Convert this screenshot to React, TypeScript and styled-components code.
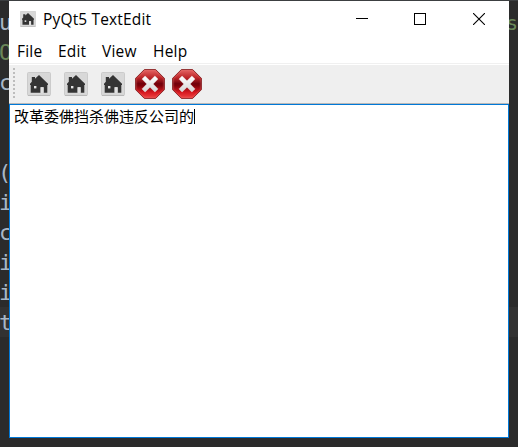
import React from "react";
import styled, { createGlobalStyle } from "styled-components";

const GlobalStyle = createGlobalStyle`
  * { box-sizing: border-box; }
  body { margin: 0; background: #2b2b2b; overflow: hidden; }
`;

const Desktop = styled.div`
  position: relative;
  width: 518px;
  height: 447px;
  padding-top: 6px;
  overflow: hidden;
  background: #2b2b2b;
  border-top: 1px solid #3c3f41;
`;

const CodeLine = styled.div<{ $current?: boolean }>`
  display: flex;
  justify-content: space-between;
  height: 30px;
  line-height: 32px;
  font-family: "DejaVu Sans Mono", monospace;
  font-size: 22px;
  white-space: pre;
  background: ${(p) => (p.$current ? "#323232" : "transparent")};
`;

const Code = styled.span<{ $tone?: "string" | "plain"; $shift?: number }>`
  color: ${(p) => (p.$tone === "string" ? "#6a8759" : "#a9b7c6")};
  margin-left: ${(p) => p.$shift ?? 0}px;
`;

const CodeEnd = styled(Code)`
  width: 12px;
  font-size: 20px;
`;

const Window = styled.section`
  position: absolute;
  left: 9px;
  top: 0;
  width: 500px;
  height: 437px;
  display: flex;
  flex-direction: column;
  background: #fff;
  color: #000;
  font-family: "Open Sans", "Noto Sans", sans-serif;
`;

const TitleBar = styled.header`
  display: flex;
  align-items: center;
  height: 36px;
  padding-left: 11px;
`;

const Title = styled.span`
  flex: 1;
  margin-left: 7px;
  font-size: 15.5px;
  line-height: 36px;
  letter-spacing: 0.16px;
`;

const Controls = styled.div`
  display: grid;
  grid-template-columns: 58px 59px 36px;
`;

const MenuBar = styled.nav`
  display: flex;
  height: 26px;
  padding-left: 8px;
`;

const MenuItem = styled.span<{ $width: number }>`
  width: ${(p) => p.$width}px;
  font-size: 15.5px;
  letter-spacing: 0.2px;
  line-height: 28px;
`;

const ToolBar = styled.div`
  display: flex;
  align-items: center;
  height: 41px;
  padding-left: 4px;
  background: #efefef;
  border-top: 1px solid #f0f0f0;
  border-bottom: 1px solid #b8b8b8;
  box-shadow: inset 0 1px #fff;
`;

const Handle = styled.svg`
  margin-right: 4px;
  margin-top: 1px;
`;

const ToolButton = styled.span`
  display: grid;
  place-items: center;
  width: 37px;
  height: 37px;
  padding-top: 1px;
`;

const TextArea = styled.main`
  flex: 1;
  display: flex;
  align-items: flex-start;
  padding: 2px 0 0 4px;
  border: 1px solid #0078d7;
  font-family: "Noto Sans CJK SC", sans-serif;
  font-size: 15px;
  line-height: 18px;
`;

const Caret = styled.span`
  width: 1px;
  height: 15px;
  margin-top: 2px;
  background: #000;
`;

const HomeIcon = ({ size }: { size: number }) => (
  <svg width={size} height={size} viewBox="0 0 24 24">
    <rect x="0.5" y="0.5" width="23" height="23" rx="1" fill="#d8d8d8" stroke="#cbcbcb" />
    <path d="M1 23.4H23" stroke="#b7b7b7" />
    <path
      d="M12 3L21 11.7V13H20.3V20.8H16.6V15.2H13.6V20.8H3.7V13H3V11.7L4.8 9.8V5H8V6.8Z"
      fill="#343434"
    />
    <rect x="7" y="14" width="2.4" height="2.4" fill="#e4e4e4" />
    <rect x="13.6" y="15.2" width="3" height="5.6" fill="#e0e0e0" />
  </svg>
);

const StopIcon = () => (
  <svg width="30" height="30" viewBox="0 0 30 30">
    <defs>
      <linearGradient id="stop" x1="0" y1="0" x2="0" y2="1">
        <stop offset="0" stopColor="#e56563" />
        <stop offset="0.28" stopColor="#bd2629" />
        <stop offset="0.49" stopColor="#70000a" />
        <stop offset="0.56" stopColor="#800008" />
        <stop offset="0.8" stopColor="#d91b22" />
        <stop offset="1" stopColor="#ee4644" />
      </linearGradient>
      <linearGradient id="cross" x1="0" y1="0" x2="0" y2="1">
        <stop offset="0" stopColor="#fff" />
        <stop offset="1" stopColor="#d5d5d5" />
      </linearGradient>
    </defs>
    <path d="M9.3 .6H20.7L29.4 9.3V20.7L20.7 29.4H9.3L.6 20.7V9.3Z" fill="url(#stop)" stroke="#8e2a2c" />
    <path d="M9.7 1.7H20.3L28.3 9.7V20.3L20.3 28.3H9.7L1.7 20.3V9.7Z" fill="none" stroke="#ff918b" strokeOpacity=".25" />
    <path
      d="M10.1 7L15 11.8L19.9 7L23 10.1L18.2 15L23 19.9L19.9 23L15 18.2L10.1 23L7 19.9L11.8 15L7 10.1Z"
      fill="url(#cross)"
      stroke="#e8dddd"
      strokeWidth=".5"
      strokeLinejoin="round"
    />
  </svg>
);

const lines = ["u", "O", "c", "", "", "(", "i", "c", "i", "i", "t"];
const menus = [
  { label: "File", width: 41 },
  { label: "Edit", width: 44 },
  { label: "View", width: 51 },
  { label: "Help", width: 40 },
];

export default function App() {
  return (
    <>
      <GlobalStyle />
      <Desktop>
        {lines.map((text, i) => (
          <CodeLine key={i} $current={i === 10}>
            <Code $tone={i === 1 ? "string" : "plain"} $shift={text === "(" ? -2 : -1}>{text}</Code>
            {i === 0 && <CodeEnd $tone="string">s</CodeEnd>}
          </CodeLine>
        ))}
        <Window>
          <TitleBar>
            <HomeIcon size={16} />
            <Title>PyQt5 TextEdit</Title>
            <Controls>
              <svg width="12" height="12"><path d="M0 5.5H12" stroke="#000" /></svg>
              <svg width="12" height="12"><rect x=".5" y=".5" width="11" height="11" fill="none" stroke="#000" /></svg>
              <svg width="12" height="12"><path d="M0 0L12 12M12 0L0 12" stroke="#000" strokeWidth="1.1" /></svg>
            </Controls>
          </TitleBar>
          <MenuBar>
            {menus.map((m) => <MenuItem key={m.label} $width={m.width}>{m.label}</MenuItem>)}
          </MenuBar>
          <ToolBar>
            <Handle width="3" height="32">
              {Array.from({ length: 8 }, (_, i) => (
                <rect key={i} x="0" y={i * 4} width="2" height="2" fill="#bdbdbd" />
              ))}
            </Handle>
            <ToolButton><HomeIcon size={24} /></ToolButton>
            <ToolButton><HomeIcon size={24} /></ToolButton>
            <ToolButton><HomeIcon size={24} /></ToolButton>
            <ToolButton><StopIcon /></ToolButton>
            <ToolButton><StopIcon /></ToolButton>
          </ToolBar>
          <TextArea>
            <span>改革委佛挡杀佛违反公司的</span>
            <Caret />
          </TextArea>
        </Window>
      </Desktop>
    </>
  );
}
